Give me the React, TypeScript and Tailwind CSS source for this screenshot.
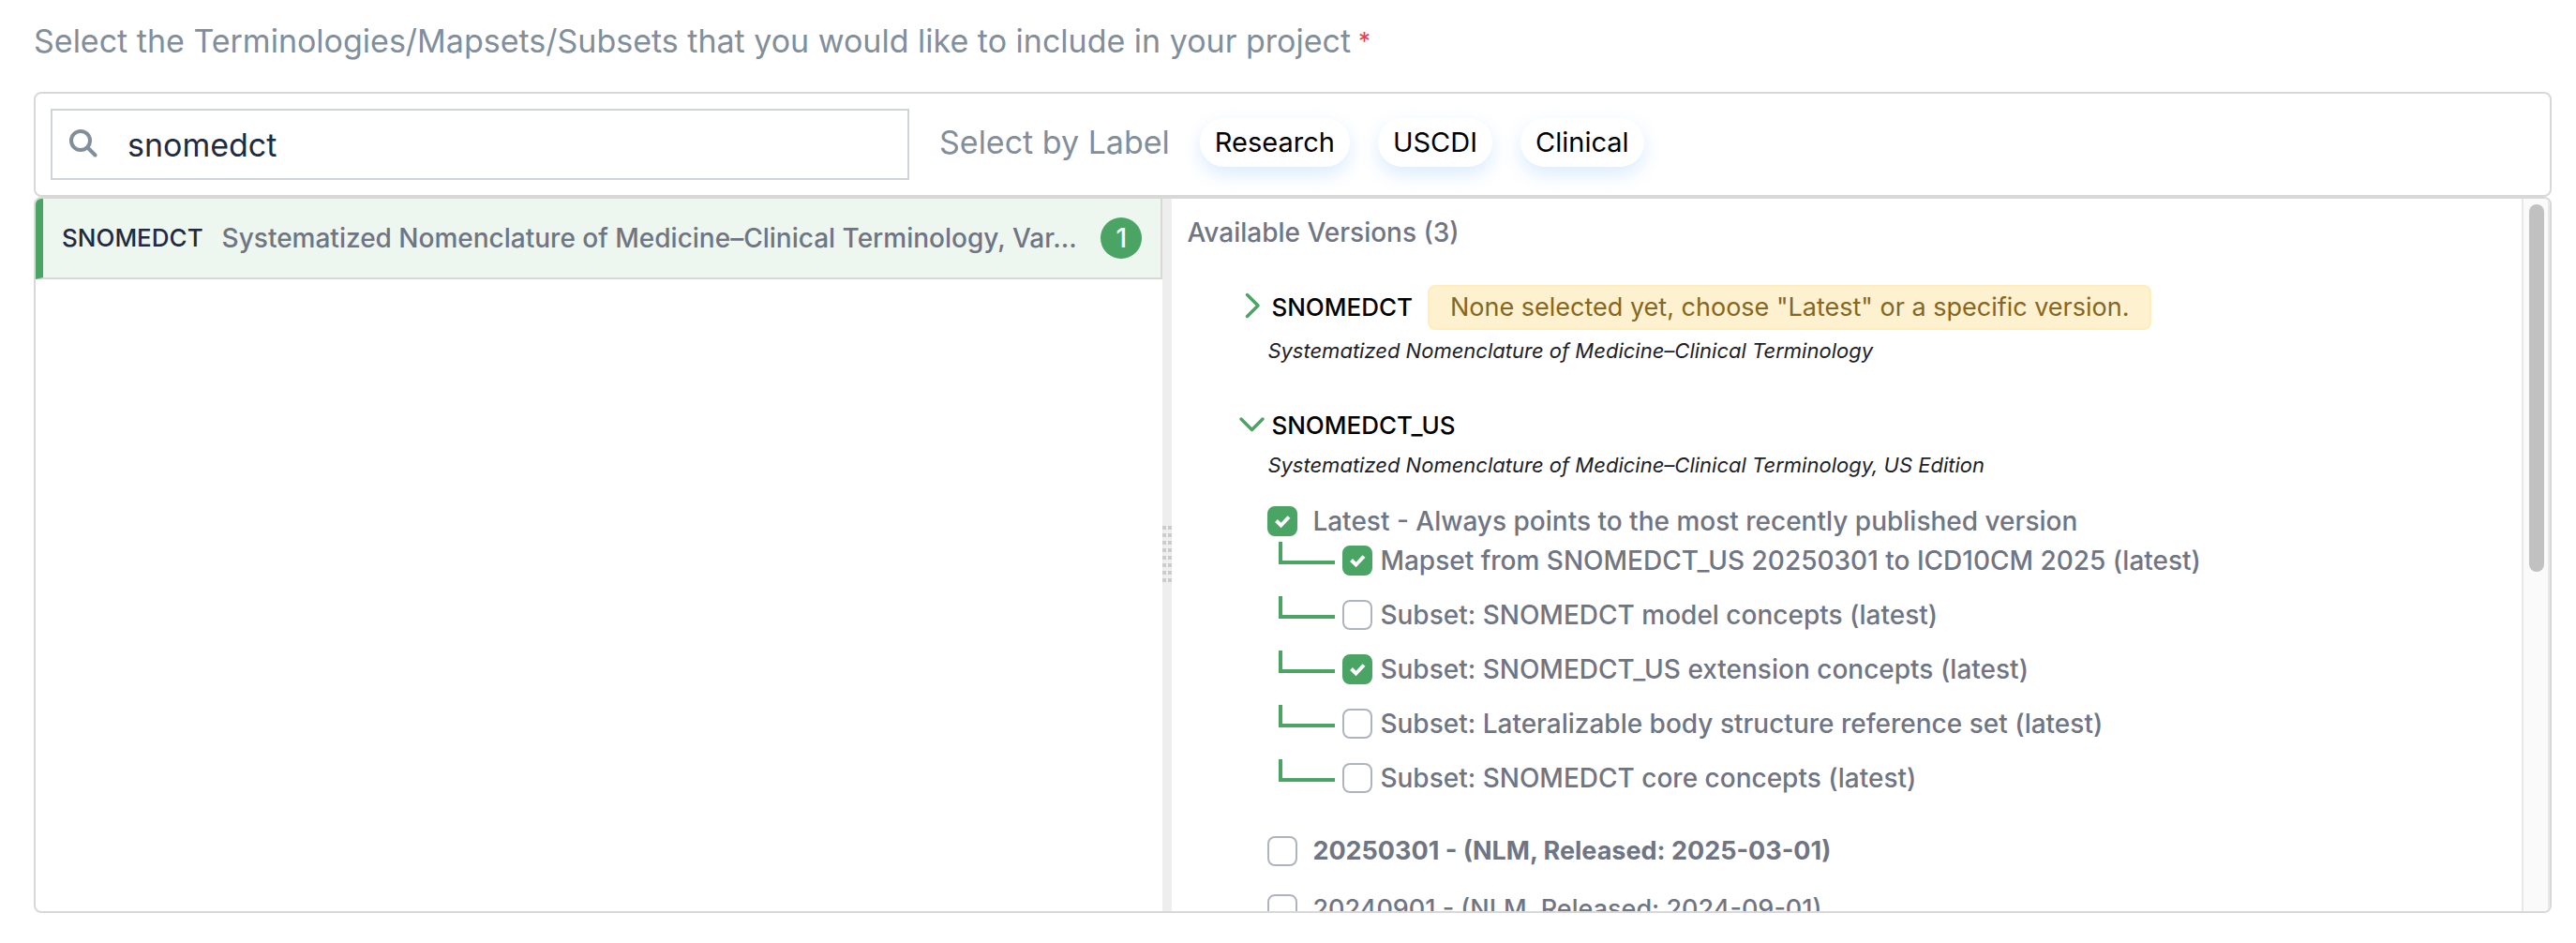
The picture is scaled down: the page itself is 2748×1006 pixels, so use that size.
import { useState } from "react";

const versions = [
  { id: "v20250301", label: "20250301 - (NLM, Released: 2025-03-01)", bold: true },
  { id: "v20240901", label: "20240901 - (NLM, Released: 2024-09-01)", bold: false },
];

const latestItems = [
  { id: "mapset-icd10cm", label: "Mapset from SNOMEDCT_US 20250301 to ICD10CM 2025 (latest)", checked: true },
  { id: "subset-model", label: "Subset: SNOMEDCT model concepts (latest)", checked: false },
  { id: "subset-extension", label: "Subset: SNOMEDCT_US extension concepts (latest)", checked: true },
  { id: "subset-body", label: "Subset: Lateralizable body structure reference set (latest)", checked: false },
  { id: "subset-core", label: "Subset: SNOMEDCT core concepts (latest)", checked: false },
];

function Checkbox({ id, defaultChecked = false }: { id: string; defaultChecked?: boolean }) {
  return (
    <span className="grid size-8 shrink-0">
      <input
        id={id}
        type="checkbox"
        defaultChecked={defaultChecked}
        className="peer col-start-1 row-start-1 size-8 appearance-none rounded-lg border-2 border-[#afb5c0] bg-white checked:border-[#4aa564] checked:bg-[#4aa564]"
      />
      <svg
        viewBox="0 0 32 32"
        aria-hidden="true"
        className="pointer-events-none invisible col-start-1 row-start-1 size-8 peer-checked:visible"
      >
        <path d="M9.5 15.5l5 5 8.5-9" fill="none" stroke="#fff" strokeWidth="4" />
      </svg>
    </span>
  );
}

function LabelTag({ children }: { children: string }) {
  return (
    <button
      type="button"
      className="h-[52px] rounded-[26px] bg-white px-4 text-[29px] leading-[52px] text-black shadow-[0_8px_20px_0_rgba(0,123,255,0.15)]"
    >
      {children}
    </button>
  );
}

function Chevron({ open }: { open: boolean }) {
  return (
    <svg
      viewBox="0 0 32 32"
      aria-hidden="true"
      className="size-8"
      fill="none"
      stroke="#4aa564"
      strokeWidth="3.5"
      strokeLinecap="round"
      strokeLinejoin="round"
    >
      {open ? <path d="M4 9l11.500 11.500L27 9" /> : <path d="M10.500 2.500L22 14 10.500 25.500" />}
    </svg>
  );
}

export default function App() {
  const [query, setQuery] = useState("snomedct");

  return (
    <main className="flex h-screen min-h-[600px] flex-col bg-white pr-[26px] pb-8 pl-9 font-['Inter',sans-serif]">
      <label htmlFor="search" className="flex h-[98px] shrink-0 items-start gap-2 pt-5 text-[34px] leading-[48px] text-[#818e9b]">
        <span>Select the Terminologies/Mapsets/Subsets that you would like to include in your project</span>
        <span className="text-[26px] leading-[48px] text-[#ed3b55]">*</span>
      </label>

      <section className="flex h-28 shrink-0 items-center gap-8 rounded-lg border-2 border-[#d8d8d8] px-4">
        <div className="flex h-[76px] w-full max-w-[916px] items-center border-2 border-[#ced4da] pl-4">
          <svg
            viewBox="0 0 32 32"
            aria-hidden="true"
            className="size-8"
            fill="none"
            stroke="#818e9b"
            strokeWidth="4"
            strokeLinecap="round"
          >
            <circle cx="14" cy="12" r="10" />
            <path d="M21.500 19.500l8 8" />
          </svg>
          <input
            id="search"
            type="text"
            value={query}
            onChange={(e) => setQuery(e.target.value)}
            className="ml-8 h-full min-w-0 flex-1 text-[34px] text-[#1f2b40] outline-none"
          />
        </div>
        <div className="flex shrink-0 items-center pb-1">
          <span className="mr-8 text-[34px] leading-[48px] text-[#818e9b]">Select by Label</span>
          <div className="flex items-center gap-[30px]">
            <LabelTag>Research</LabelTag>
            <LabelTag>USCDI</LabelTag>
            <LabelTag>Clinical</LabelTag>
          </div>
        </div>
      </section>

      <section className="grid min-h-0 flex-1 grid-cols-[minmax(0,45fr)_10px_minmax(0,55fr)] overflow-hidden rounded-lg border-2 border-[#d8d8d8]">
        <div>
          <button
            type="button"
            className="flex h-[86px] w-full items-center border-r-2 border-b-2 border-l-8 border-r-[#d8d8d8] border-b-[#d8d8d8] border-l-[#4aa564] bg-[#edf6ef] pr-5 pl-5 text-left leading-10 font-medium"
          >
            <span className="shrink-0 text-[26px] text-[#1f2b40]">SNOMEDCT</span>
            <span className="ml-5 min-w-0 flex-1 truncate text-[28px] text-[#707583]">
              Systematized Nomenclature of Medicine–Clinical Terminology, Var…
            </span>
            <span className="ml-4 flex size-11 shrink-0 items-center justify-center rounded-full bg-[#4aa564] text-[28px] text-white">
              1
            </span>
          </button>
        </div>

        <div className="flex flex-col items-center justify-center bg-[#eeeeee]">
          <svg viewBox="0 0 10 62" aria-hidden="true" className="h-[62px] w-[10px]" fill="#cccccc">
            {[0, 8, 16, 24, 32, 40, 48, 56].map((y) => (
              <g key={y}>
                <rect x="0" y={y} width="4" height="4" />
                <rect x="6" y={y} width="4" height="4" />
              </g>
            ))}
          </svg>
        </div>

        <div className="flex min-h-0">
          <div className="min-w-0 flex-1 overflow-y-auto pl-4 [scrollbar-width:none]">
            <h2 className="pt-4 text-[28px] leading-10 font-medium text-[#707583]">Available Versions (3)</h2>

            <div className="pt-9 pl-[54px]">
              <div className="flex h-12 items-center">
                <button type="button" className="flex items-center gap-1 text-[26px] leading-10 font-medium text-black">
                  <Chevron open={false} />
                  SNOMEDCT
                </button>
                <span className="ml-4 rounded-lg border-2 border-[#ffeeba] bg-[#fdf1cf] px-[22px] text-[27px] leading-[44px] text-[#856623]">
                  None selected yet, choose "Latest" or a specific version.
                </span>
              </div>
              <p className="pt-1 pl-8 text-[22px] leading-9 text-[#1c2128] italic">
                Systematized Nomenclature of Medicine–Clinical Terminology
              </p>
            </div>

            <div className="pt-[38px] pl-[54px]">
              <button type="button" className="flex h-12 items-center gap-1 text-[26px] leading-10 font-medium text-black">
                <Chevron open />
                SNOMEDCT_US
              </button>
              <p className="pl-8 text-[22px] leading-9 text-[#1c2128] italic">
                Systematized Nomenclature of Medicine–Clinical Terminology, US Edition
              </p>

              <div className="pt-[22px] pl-8 text-[28px] leading-10 font-medium text-[#707583]">
                <div className="flex h-10 items-center gap-4">
                  <Checkbox id="latest" defaultChecked />
                  <label htmlFor="latest">Latest - Always points to the most recently published version</label>
                </div>
                <ul className="pt-0.5 pl-3">
                  {latestItems.map((item) => (
                    <li key={item.id} className="flex h-[58px] items-start">
                      <span className="h-6 w-[60px] border-b-4 border-l-4 border-[#4aa564]" />
                      <span className="flex items-center gap-2 pl-2">
                        <Checkbox id={item.id} defaultChecked={item.checked} />
                        <label htmlFor={item.id}>{item.label}</label>
                      </span>
                    </li>
                  ))}
                </ul>
                <ul className="flex flex-col gap-[22px] pt-5 text-[27px]">
                  {versions.map((version) => (
                    <li key={version.id} className="flex h-10 items-center gap-4">
                      <Checkbox id={version.id} />
                      <label htmlFor={version.id} className={version.bold ? "font-bold" : "font-medium"}>
                        {version.label}
                      </label>
                    </li>
                  ))}
                </ul>
              </div>
            </div>
          </div>

          <div className="w-[30px] shrink-0 border-x-2 border-[#e8e8e8] bg-[#fafafa] px-1.5 pt-1.5" aria-hidden="true">
            <div className="h-[52%] w-4 rounded-full bg-[#c1c1c1]" />
          </div>
        </div>
      </section>
    </main>
  );
}
